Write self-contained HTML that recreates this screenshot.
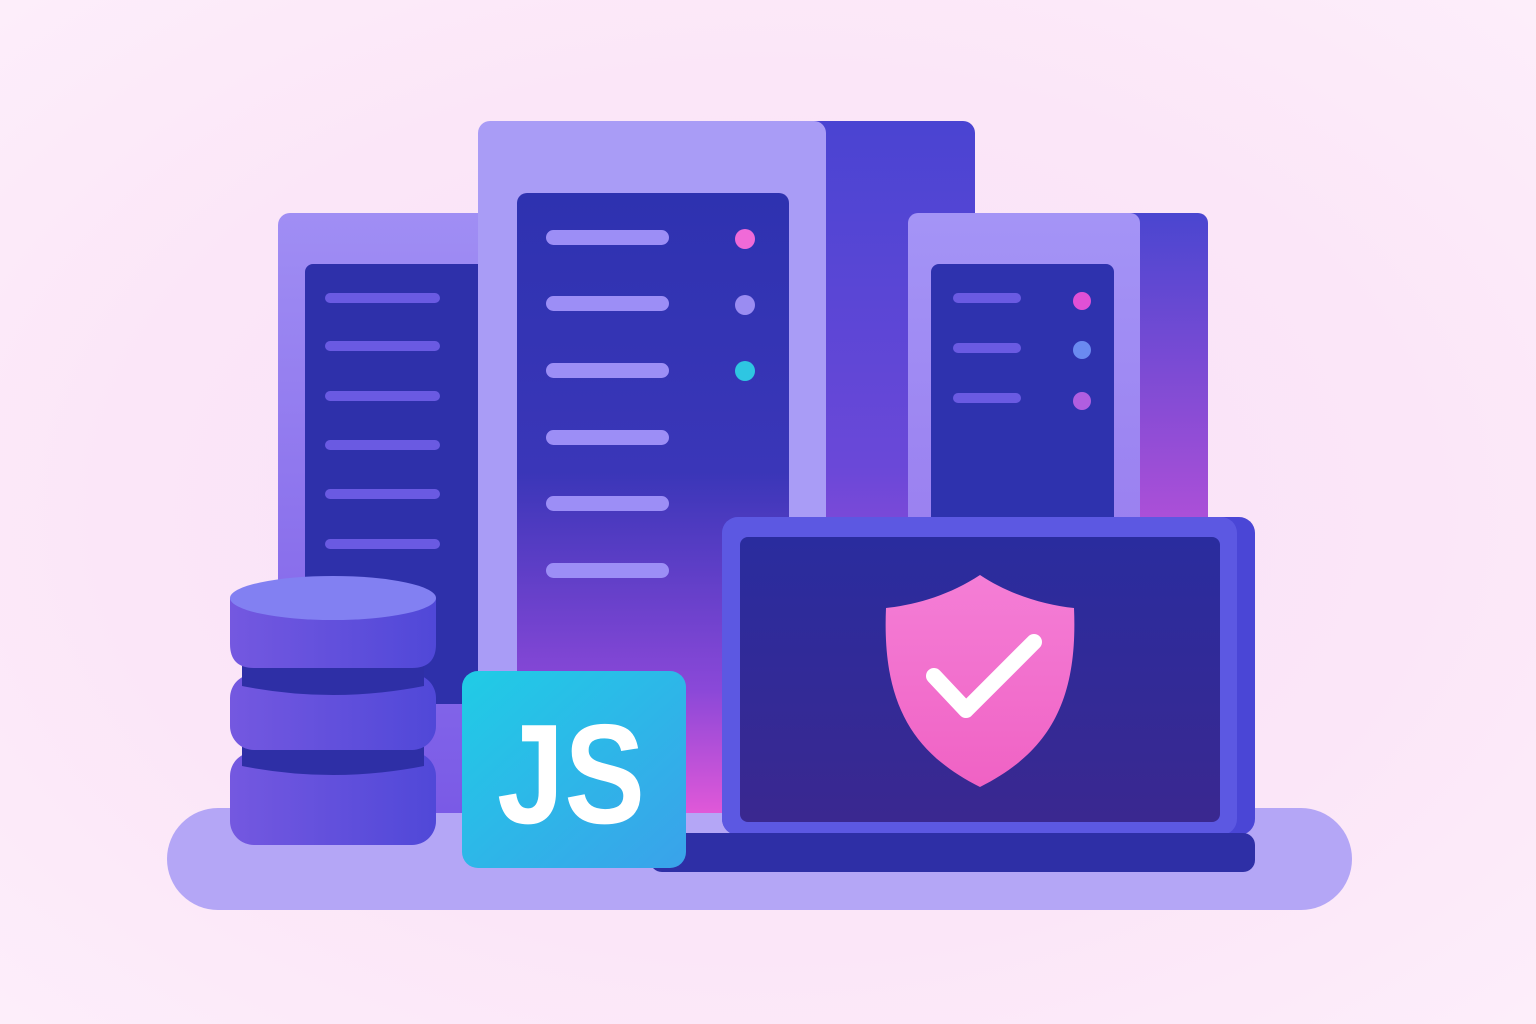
<!DOCTYPE html>
<html><head><meta charset="utf-8"><style>
html,body{margin:0;padding:0;width:1536px;height:1024px;overflow:hidden}
body{background:radial-gradient(ellipse at 50% 50%,#f9e0f6 0%,#fbe6f8 60%,#fdeefa 100%)}
svg{display:block}
</style></head><body>
<svg width="1536" height="1024" viewBox="0 0 1536 1024" xmlns="http://www.w3.org/2000/svg">
<defs>
<linearGradient id="lft" x1="0" y1="0" x2="0" y2="1"><stop offset="0" stop-color="#a08ef4"/><stop offset="1" stop-color="#7a5ae6"/></linearGradient>
<linearGradient id="midside" x1="0" y1="0" x2="0" y2="1"><stop offset="0" stop-color="#4a44d2"/><stop offset="0.5" stop-color="#6a48d8"/><stop offset="1" stop-color="#d050d8"/></linearGradient>
<linearGradient id="midpanel" x1="0" y1="0" x2="0" y2="1"><stop offset="0" stop-color="#2e32b0"/><stop offset="0.45" stop-color="#3a36b8"/><stop offset="0.8" stop-color="#8a48d8"/><stop offset="1" stop-color="#e058d8"/></linearGradient>
<linearGradient id="rside" x1="0" y1="0" x2="0" y2="1"><stop offset="0" stop-color="#4a46d0"/><stop offset="1" stop-color="#b050d8"/></linearGradient>
<linearGradient id="rfront" x1="0" y1="0" x2="0" y2="1"><stop offset="0" stop-color="#a494f6"/><stop offset="1" stop-color="#9a80f0"/></linearGradient>
<linearGradient id="screen" x1="0" y1="0" x2="0" y2="1"><stop offset="0" stop-color="#2a2c9e"/><stop offset="1" stop-color="#3a2890"/></linearGradient>
<linearGradient id="shield" x1="0" y1="0" x2="0" y2="1"><stop offset="0" stop-color="#f47ed6"/><stop offset="1" stop-color="#f062c4"/></linearGradient>
<linearGradient id="js" x1="0" y1="0" x2="1" y2="1"><stop offset="0" stop-color="#20cce6"/><stop offset="1" stop-color="#3aa2ea"/></linearGradient>
<linearGradient id="disc" x1="0" y1="0" x2="1" y2="0"><stop offset="0" stop-color="#7458e0"/><stop offset="1" stop-color="#5048d8"/></linearGradient>
</defs>
<rect x="167" y="808" width="1185" height="102" rx="51" fill="#b4a6f6"/>
<rect x="278" y="213" width="220" height="600" rx="12" fill="url(#lft)"/>
<rect x="305" y="264" width="190" height="440" rx="8" fill="#2e30aa"/>
<g fill="#6a5ae2">
<rect x="325" y="293" width="115" height="10" rx="5"/><rect x="325" y="341" width="115" height="10" rx="5"/>
<rect x="325" y="391" width="115" height="10" rx="5"/><rect x="325" y="440" width="115" height="10" rx="5"/>
<rect x="325" y="489" width="115" height="10" rx="5"/><rect x="325" y="539" width="115" height="10" rx="5"/>
</g>
<rect x="800" y="121" width="175" height="690" rx="12" fill="url(#midside)"/>
<rect x="478" y="121" width="348" height="690" rx="12" fill="#a99cf6"/>
<rect x="517" y="193" width="272" height="620" rx="10" fill="url(#midpanel)"/>
<g fill="#9c8ef6">
<rect x="546" y="230" width="123" height="15" rx="7.5"/><rect x="546" y="296" width="123" height="15" rx="7.5"/>
<rect x="546" y="363" width="123" height="15" rx="7.5"/><rect x="546" y="430" width="123" height="15" rx="7.5"/>
<rect x="546" y="496" width="123" height="15" rx="7.5"/><rect x="546" y="563" width="123" height="15" rx="7.5"/>
</g>
<circle cx="745" cy="239" r="10" fill="#f06ad8"/>
<circle cx="745" cy="305" r="10" fill="#9a8cf2"/>
<circle cx="745" cy="371" r="10" fill="#2ec6e2"/>
<rect x="1120" y="213" width="88" height="320" rx="10" fill="url(#rside)"/>
<rect x="908" y="213" width="232" height="320" rx="10" fill="url(#rfront)"/>
<rect x="931" y="264" width="183" height="270" rx="8" fill="#2e32ae"/>
<g fill="#6a5ae2">
<rect x="953" y="293" width="68" height="10" rx="5"/><rect x="953" y="343" width="68" height="10" rx="5"/><rect x="953" y="393" width="68" height="10" rx="5"/>
</g>
<circle cx="1082" cy="301" r="9" fill="#e050d6"/>
<circle cx="1082" cy="350" r="9" fill="#6a8af0"/>
<circle cx="1082" cy="401" r="9" fill="#b05ee0"/>
<rect x="722" y="517" width="533" height="318" rx="16" fill="#4a46d6"/>
<rect x="722" y="517" width="515" height="318" rx="16" fill="#5c58e2"/>
<rect x="740" y="537" width="480" height="285" rx="8" fill="url(#screen)"/>
<rect x="650" y="833" width="605" height="39" rx="12" fill="#2e2fa6"/>
<path d="M980 575 C1010 595 1045 605 1074 608 C1078 700 1050 752 980 787 C910 752 882 700 886 608 C915 605 950 595 980 575 Z" fill="url(#shield)"/>
<path d="M934 676 L966 710 L1034 642" fill="none" stroke="#fff" stroke-width="16" stroke-linecap="round" stroke-linejoin="round"/>
<rect x="462" y="671" width="224" height="197" rx="16" fill="url(#js)"/>
<text x="497" y="823" textLength="148" lengthAdjust="spacingAndGlyphs" font-family="Liberation Sans, sans-serif" font-weight="bold" font-size="142" fill="#fff">JS</text>
<g>
<rect x="242" y="655" width="182" height="40" fill="#2e2fa6"/>
<rect x="242" y="735" width="182" height="40" fill="#2e2fa6"/>
<rect x="230" y="752" width="206" height="93" rx="24" fill="url(#disc)"/>
<path d="M242 752 h182 v14 q-91 18 -182 0 z" fill="#2e2fa6"/>
<rect x="230" y="674" width="206" height="76" rx="24" fill="url(#disc)"/>
<path d="M242 674 h182 v12 q-91 18 -182 0 z" fill="#2e2fa6"/>
<path d="M230 598 v46 q0 24 24 24 h158 q24 0 24 -24 v-46 z" fill="url(#disc)"/>
<ellipse cx="333" cy="598" rx="103" ry="22" fill="#8280f2"/>
</g>
</svg>
</body></html>
